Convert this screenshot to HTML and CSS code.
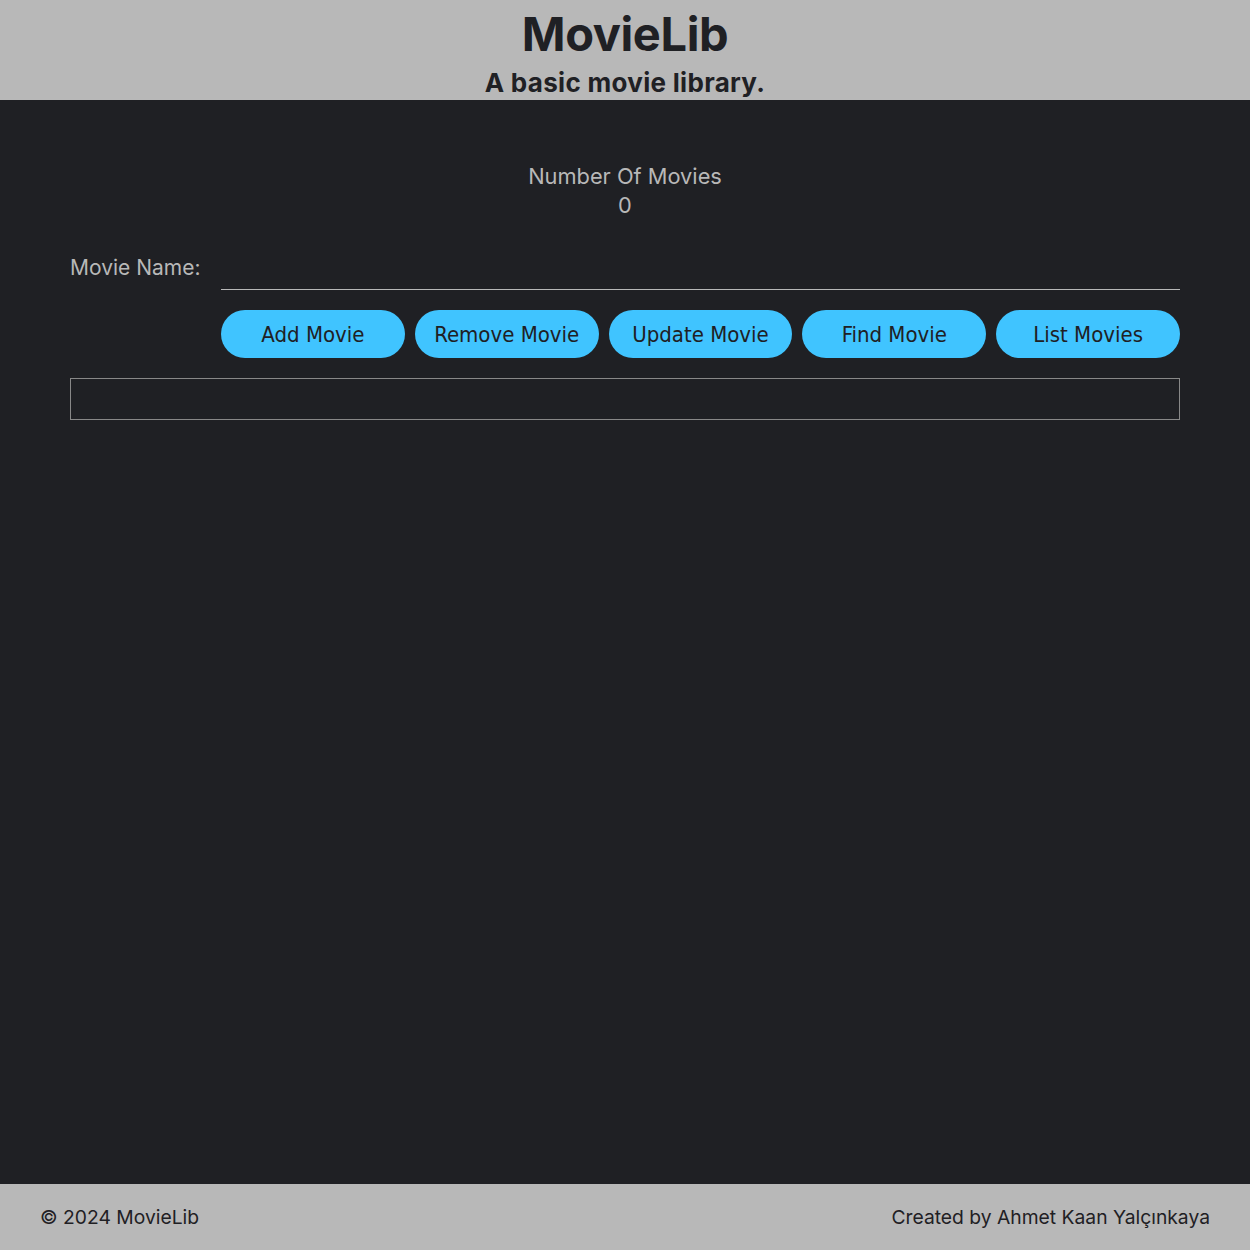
FILE: index.html
```html
<!DOCTYPE html>
<html>
<head>
<meta charset="utf-8">
<link rel="stylesheet" href="styles.css">
</head>
<body>
<div class="page">
  <header class="header">
    <h1 class="title">MovieLib</h1>
    <p class="subtitle">A basic movie library.</p>
  </header>
  <main class="main">
    <div class="count">
      <div class="count-label">Number Of Movies</div>
      <div class="count-value">0</div>
    </div>
    <div class="form-row">
      <label class="label">Movie Name:</label>
      <div class="input"></div>
    </div>
    <div class="buttons">
      <button class="btn">Add Movie</button>
      <button class="btn">Remove Movie</button>
      <button class="btn">Update Movie</button>
      <button class="btn">Find Movie</button>
      <button class="btn">List Movies</button>
    </div>
    <div class="result"></div>
  </main>
  <footer class="footer">
    <span>© 2024 MovieLib</span>
    <span>Created by Ahmet Kaan Yalçınkaya</span>
  </footer>
</div>
</body>
</html>
```
FILE: styles.css
```css
html, body { margin: 0; padding: 0; }
body { font-family: "Inter", "Noto Sans", sans-serif; background: #1f2024; }
.page { display: flex; flex-direction: column; min-height: 1250px; }
.header { background: #b8b8b8; height: 100px; text-align: center; color: #1f2024; }
.title { margin: 0; padding-top: 6px; font-size: 47px; font-weight: 700; line-height: 56px; letter-spacing: -0.4px; }
.subtitle { margin: 4px 0 0; font-size: 26px; font-weight: 700; line-height: 34px; letter-spacing: 0.3px; }
.main { flex: 1; padding: 62px 70px 0; color: #b8b8b8; }
.count { text-align: center; font-size: 21.8px; line-height: 29px; font-weight: 400; }
.form-row { display: flex; align-items: flex-end; margin-top: 30px; }
.label { width: 151px; font-size: 21px; line-height: 30px; padding-bottom: 7px; }
.input { flex: 1; height: 39px; border-bottom: 1px solid #b8b8b8; }
.buttons { display: flex; gap: 10px; margin-left: 151px; margin-top: 20px; }
.btn { flex: 1; height: 48px; border: none; border-radius: 24px; background: #40c4ff; color: #1f2024; font-family: "DejaVu Sans Condensed", "DejaVu Sans", sans-serif; font-size: 22px; padding: 0; }
.result { margin-top: 20px; height: 40px; border: 1px solid #888; }
.footer { background: #b8b8b8; height: 66px; display: flex; justify-content: space-between; align-items: center; padding: 0 40px; color: #1f2024; font-size: 19.3px; }
```
